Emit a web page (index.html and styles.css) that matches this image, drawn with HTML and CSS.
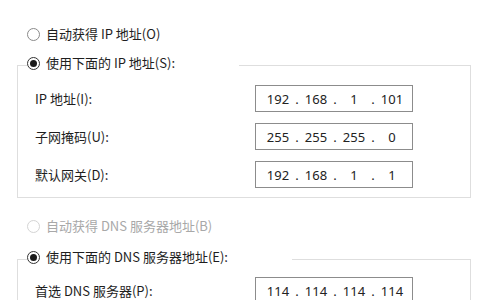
FILE: index.html
```html
<!DOCTYPE html>
<html lang="zh-CN">
<head>
<meta charset="utf-8">
<title>IP 设置</title>
<link rel="stylesheet" href="styles.css">
</head>
<body>
<div class="panel">
  <div class="opt"><span class="radio"></span><span>自动获得 IP 地址(O)</span></div>
  <fieldset class="group group-ip">
    <legend class="opt legend"><span class="radio checked"></span><span>使用下面的 IP 地址(S):</span></legend>
    <div class="row">
      <span class="lbl">IP 地址(I):</span>
      <div class="ip"><span class="seg">192</span><span class="dot">.</span><span class="seg">168</span><span class="dot">.</span><span class="seg">1</span><span class="dot">.</span><span class="seg">101</span></div>
    </div>
    <div class="row">
      <span class="lbl">子网掩码(U):</span>
      <div class="ip"><span class="seg">255</span><span class="dot">.</span><span class="seg">255</span><span class="dot">.</span><span class="seg">255</span><span class="dot">.</span><span class="seg">0</span></div>
    </div>
    <div class="row">
      <span class="lbl">默认网关(D):</span>
      <div class="ip"><span class="seg">192</span><span class="dot">.</span><span class="seg">168</span><span class="dot">.</span><span class="seg">1</span><span class="dot">.</span><span class="seg">1</span></div>
    </div>
  </fieldset>
  <div class="opt disabled opt-dns"><span class="radio"></span><span>自动获得 DNS 服务器地址(B)</span></div>
  <fieldset class="group group-dns">
    <legend class="opt legend"><span class="radio checked"></span><span>使用下面的 DNS 服务器地址(E):</span></legend>
    <div class="row">
      <span class="lbl">首选 DNS 服务器(P):</span>
      <div class="ip"><span class="seg">114</span><span class="dot">.</span><span class="seg">114</span><span class="dot">.</span><span class="seg">114</span><span class="dot">.</span><span class="seg">114</span></div>
    </div>
  </fieldset>
</div>
</body>
</html>
```
FILE: styles.css
```css
html, body {
  margin: 0;
  padding: 0;
  background: #ffffff;
  overflow: hidden;
}
body {
  width: 480px;
  height: 300px;
  font-family: "Noto Sans CJK SC", "Noto Sans", sans-serif;
  font-size: 13px;
  color: #1e1e1e;
}
.panel {
  padding: 24px 9px 0 17px;
}
.opt {
  display: flex;
  align-items: center;
  height: 20px;
  line-height: 20px;
  margin-left: 10px;
  white-space: nowrap;
}
.radio {
  box-sizing: border-box;
  width: 13px;
  height: 13px;
  border: 1px solid #8a8a8a;
  border-radius: 50%;
  margin-right: 6px;
  display: flex;
  align-items: center;
  justify-content: center;
  flex: none;
}
.radio.checked {
  border-color: #333333;
}
.radio.checked::after {
  content: "";
  width: 7px;
  height: 7px;
  border-radius: 50%;
  background: #1a1a1a;
}
.disabled {
  color: #a8a8a8;
}
.disabled .radio {
  border-color: #d4d4d4;
}
.group {
  margin: 9px 0 0 0;
  padding: 8px 0 9px 0;
  border: 1px solid #dedede;
  min-width: 0;
}
.legend {
  height: 24px;
  padding: 0 64px 4px 0;
  margin-left: 9px;
  background: #ffffff;
  box-sizing: border-box;
}
.opt-dns {
  margin-top: 18px;
}
.group-dns {
  margin-top: 11px;
  padding-top: 6px;
}
.row {
  display: flex;
  align-items: center;
  height: 27px;
  padding-left: 17px;
}
.row + .row {
  margin-top: 11px;
}
.lbl {
  width: 220px;
  flex: none;
}
.ip {
  box-sizing: border-box;
  width: 158px;
  height: 27px;
  border: 1px solid #8c8c8c;
  display: flex;
  align-items: center;
  padding-left: 7px;
  color: #222222;
  font-family: "Noto Sans", sans-serif;
}
.seg {
  width: 30px;
  text-align: center;
}
.dot {
  width: 8px;
  text-align: center;
}
```
